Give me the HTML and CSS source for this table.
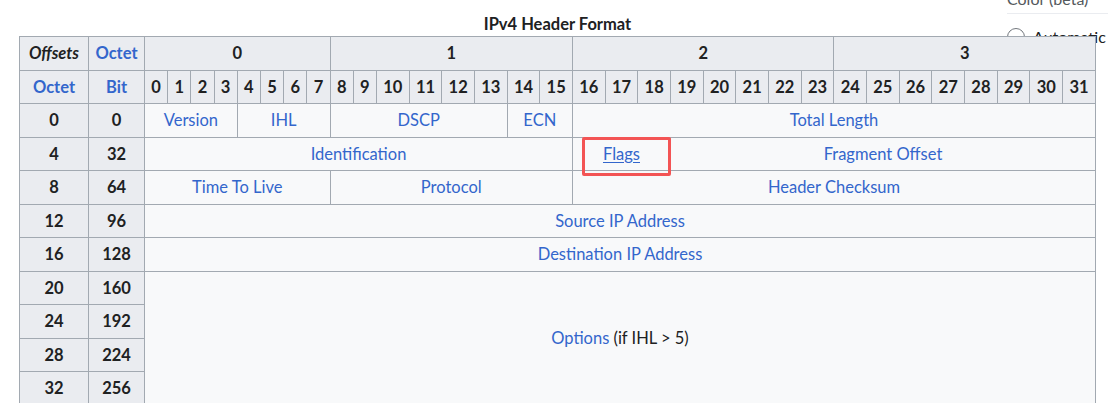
FILE: index.html
```html
<!DOCTYPE html>
<html lang="en">
<head>
<meta charset="utf-8">
<title>IPv4 Header Format</title>
<link rel="stylesheet" href="styles.css">
</head>
<body>
<div class="page">
  <aside class="side">
    <div class="side-title">Color (beta)</div>
    <label class="side-opt"><span class="radio"></span><span>Automatic</span></label>
  </aside>
  <table class="wikitable">
    <caption>IPv4 Header Format</caption>
    <colgroup>
      <col class="c-octet"><col class="c-bit">
      <col class="c-narrow"><col class="c-narrow"><col class="c-narrow"><col class="c-narrow"><col class="c-narrow">
      <col class="c-narrow"><col class="c-narrow"><col class="c-narrow"><col class="c-narrow"><col class="c-narrow">
      <col><col><col><col><col><col><col><col><col><col><col>
      <col><col><col><col><col><col><col><col><col><col><col>
    </colgroup>
    <thead>
      <tr>
        <th><i>Offsets</i></th>
        <th><a href="#">Octet</a></th>
        <th colspan="8">0</th>
        <th colspan="8">1</th>
        <th colspan="8">2</th>
        <th colspan="8">3</th>
      </tr>
      <tr>
        <th><a href="#">Octet</a></th>
        <th><a href="#">Bit</a></th>
        <th>0</th><th>1</th><th>2</th><th>3</th><th>4</th><th>5</th><th>6</th><th>7</th>
        <th>8</th><th>9</th><th>10</th><th>11</th><th>12</th><th>13</th><th>14</th><th>15</th>
        <th>16</th><th>17</th><th>18</th><th>19</th><th>20</th><th>21</th><th>22</th><th>23</th>
        <th>24</th><th>25</th><th>26</th><th>27</th><th>28</th><th>29</th><th>30</th><th>31</th>
      </tr>
    </thead>
    <tbody>
      <tr>
        <th>0</th><th>0</th>
        <td colspan="4"><a href="#">Version</a></td>
        <td colspan="4"><a href="#">IHL</a></td>
        <td colspan="6"><a href="#">DSCP</a></td>
        <td colspan="2"><a href="#">ECN</a></td>
        <td colspan="16"><a href="#">Total Length</a></td>
      </tr>
      <tr>
        <th>4</th><th>32</th>
        <td colspan="16"><a href="#">Identification</a></td>
        <td colspan="3" class="flags"><a href="#" class="u">Flags</a><span class="highlight"></span></td>
        <td colspan="13"><a href="#">Fragment Offset</a></td>
      </tr>
      <tr>
        <th>8</th><th>64</th>
        <td colspan="8"><a href="#">Time To Live</a></td>
        <td colspan="8"><a href="#">Protocol</a></td>
        <td colspan="16"><a href="#">Header Checksum</a></td>
      </tr>
      <tr>
        <th>12</th><th>96</th>
        <td colspan="32"><a href="#">Source IP Address</a></td>
      </tr>
      <tr>
        <th>16</th><th>128</th>
        <td colspan="32"><a href="#">Destination IP Address</a></td>
      </tr>
      <tr>
        <th>20</th><th>160</th>
        <td colspan="32" rowspan="4"><a href="#">Options</a> (if IHL &gt; 5)</td>
      </tr>
      <tr><th>24</th><th>192</th></tr>
      <tr><th>28</th><th>224</th></tr>
      <tr><th>32</th><th>256</th></tr>
    </tbody>
  </table>
</div>
</body>
</html>
```

FILE: styles.css
```css
* { box-sizing: border-box; }

body {
  margin: 0;
  background: #ffffff;
  color: #202122;
  font-family: Lato, "Liberation Sans", sans-serif;
  font-size: 16.5px;
}

.page {
  position: relative;
  padding: 13px 0 0 19px;
}

a {
  color: #3366cc;
  text-decoration: none;
}

a.u {
  text-decoration: underline;
  text-underline-offset: 2px;
}

/* Right side panel (partly hidden behind the table) */
.side {
  position: absolute;
  top: -11px;
  right: 0;
  width: 101px;
  color: #54595d;
  font-size: 16px;
}

.side-title {
  line-height: 20px;
  padding-bottom: 4px;
  border-bottom: 1px solid #eaecf0;
  white-space: nowrap;
}

.side-opt {
  display: flex;
  align-items: center;
  gap: 8px;
  margin-top: 13px;
  color: #202122;
  line-height: 20px;
}

.radio {
  flex: none;
  width: 18px;
  height: 18px;
  border: 1px solid #72777d;
  border-radius: 50%;
  background: #fff;
}

/* Table */
.wikitable {
  position: relative;
  z-index: 1;
  table-layout: fixed;
  width: 1077px;
  border-collapse: collapse;
  background: #f8f9fa;
}

.wikitable caption {
  font-weight: 700;
  line-height: 23px;
  text-align: center;
}

.c-octet { width: 69px; }
.c-bit { width: 56px; }
.c-narrow { width: 23.2px; }

.wikitable th,
.wikitable td {
  border: 1px solid #a2a9b1;
  padding: 5.05px 0;
  line-height: 22.4px;
  text-align: center;
  white-space: nowrap;
}

.wikitable th {
  background: #eaecf0;
  font-weight: 700;
  color: #202122;
}

.wikitable td {
  background: #f8f9fa;
}

.flags {
  position: relative;
}

.highlight {
  position: absolute;
  left: 9px;
  top: -1px;
  width: 89px;
  height: 39px;
  border: 3px solid #f35454;
  border-radius: 2px;
  pointer-events: none;
}
```
